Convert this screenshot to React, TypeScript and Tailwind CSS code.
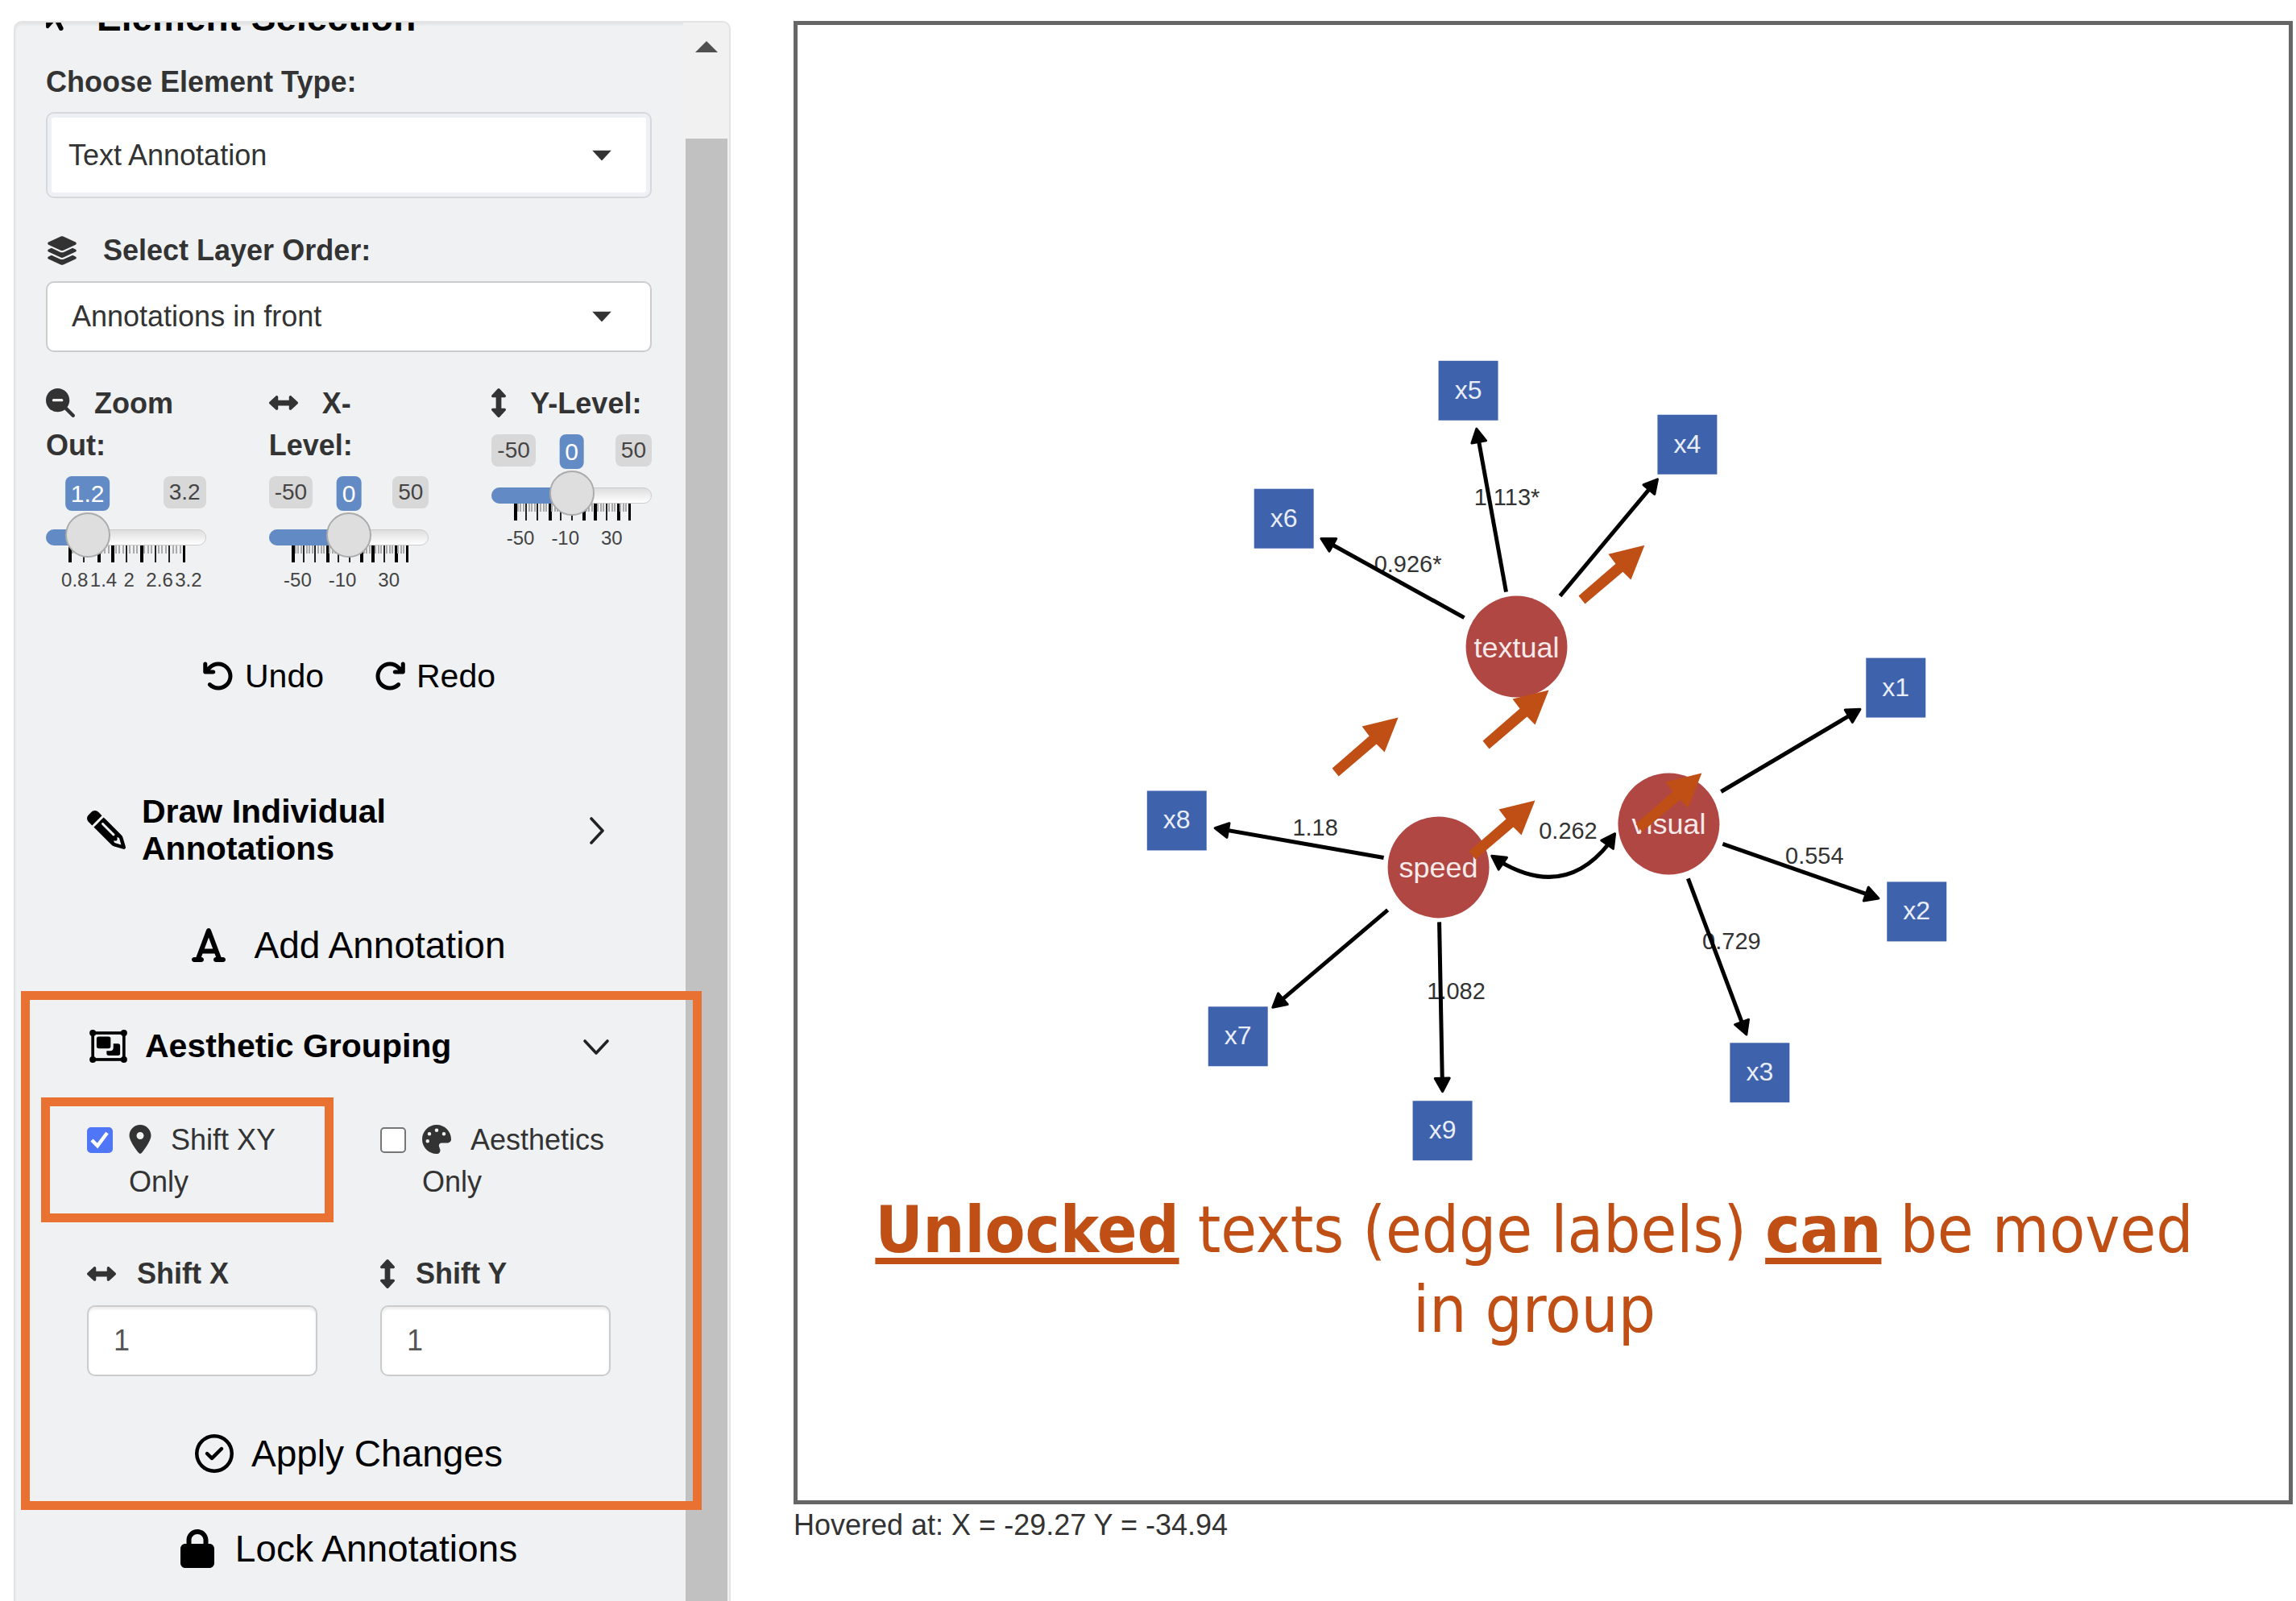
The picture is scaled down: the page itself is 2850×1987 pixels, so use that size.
import { useId, type ReactNode } from "react";
import {
  FaArrowPointer,
  FaLayerGroup,
  FaMagnifyingGlassMinus,
  FaLeftRight,
  FaUpDown,
  FaArrowRotateLeft,
  FaArrowRotateRight,
  FaPencil,
  FaFont,
  FaLocationDot,
  FaPalette,
  FaRegCircleCheck,
  FaLock,
} from "react-icons/fa6";

function Caret() {
  return (
    <svg viewBox="0 0 24 13" className="pointer-events-none absolute right-[50px] top-1/2 h-[13px] w-6 -translate-y-1/2 fill-[#333]">
      <path d="M0 0h24L12 13z" />
    </svg>
  );
}

function Chevron({ open }: { open?: boolean }) {
  return (
    <svg viewBox="0 0 36 36" className="size-9 shrink-0 fill-none stroke-[#222] stroke-[3.6]" strokeLinecap="round" strokeLinejoin="round">
      {open ? <path d="M4 12l14 15 14-15" /> : <path d="M12 4l14 15-14 15" />}
    </svg>
  );
}

function GroupIcon() {
  return (
    <svg viewBox="0 0 139 122" className="ml-[3px] mr-[22px] h-[41px] w-[47px] shrink-0 fill-black">
      <rect x="12" y="12" width="115" height="98" fill="none" stroke="#000" strokeWidth="11" />
      <circle cx="12" cy="12" r="12" />
      <circle cx="127" cy="12" r="12" />
      <circle cx="12" cy="110" r="12" />
      <circle cx="127" cy="110" r="12" />
      <rect x="26" y="25" width="52" height="44" rx="8" />
      <path d="M88 51h17a8 8 0 0 1 8 8v28a8 8 0 0 1-8 8H71a8 8 0 0 1-8-8v-9h13a12 12 0 0 0 12-12z" />
    </svg>
  );
}

type SliderProps = {
  icon: ReactNode;
  label: string;
  min?: string;
  max: string;
  value: string;
  range: [number, number, number];
  pct: number;
  labels: { text: string; at: number }[];
  steps: number;
  minor: number;
  bold: number[];
};

function Slider({ icon, label, min, max, value, range, pct, labels, steps, minor, bold }: SliderProps) {
  const id = useId();
  const total = steps * minor;
  const ticks = Array.from({ length: total + 1 }, (_, i) => i);
  return (
    <div className="min-w-0 flex-1">
      <label htmlFor={id} className="block text-[36px] font-bold leading-[52px]">
        {icon}
        {label}
      </label>
      <div className="relative mt-3 h-[148px]">
        <div className="flex justify-between text-[28px] leading-10 text-[#444]">
          <span className={min ? "rounded-lg bg-[#d8d8d9] px-[7px]" : "invisible"}>{min ?? "0"}</span>
          <span className="rounded-lg bg-[#d8d8d9] px-[7px]">{max}</span>
        </div>
        <span
          className="absolute top-0 -translate-x-1/2 rounded-lg bg-[#628bc6] px-[7px] text-[30px] leading-[43px] text-white"
          style={{ left: `${pct}%` }}
        >
          {value}
        </span>
        <div className="absolute inset-x-0 top-[66px] h-5 rounded-[10px] border border-[#ccc] bg-gradient-to-b from-[#dedede] to-white" />
        <div className="absolute left-0 top-[66px] h-5 rounded-l-[10px] bg-[#628bc6]" style={{ width: `${pct}%` }} />
        <svg viewBox="0 0 146 22" className="absolute left-[27px] top-[86px] h-[22px] w-[146px]">
          {ticks.map((i) => {
            const major = i % minor === 0;
            const heavy = major && bold.includes(i / minor);
            const x = Math.round(2 + (i * 142) / total);
            return (
              <rect
                key={i}
                x={x - 1}
                y="0"
                width={heavy ? 4 : 2}
                height={major ? 21 : 10}
                fill={major ? (heavy ? "#000" : "#222") : "#aaa"}
              />
            );
          })}
        </svg>
        {labels.map((l) => (
          <span key={l.text} className="absolute top-[113px] -translate-x-1/2 text-[24px] leading-8 text-[#444]" style={{ left: `${l.at}%` }}>
            {l.text}
          </span>
        ))}
        <span
          className="absolute top-[45px] size-14 -translate-x-1/2 rounded-full border-2 border-[#ababab] bg-[#dedede]"
          style={{ left: `${pct}%` }}
        />
        <input
          id={id}
          type="range"
          min={range[0]}
          max={range[1]}
          defaultValue={range[2]}
          step={0.1}
          className="absolute inset-x-0 top-[45px] h-14 w-full opacity-0"
        />
      </div>
    </div>
  );
}

function NumberField({ icon, label }: { icon: ReactNode; label: string }) {
  const id = useId();
  return (
    <div className="min-w-0 flex-1">
      <label htmlFor={id} className="flex h-[52px] items-center text-[36px] font-bold">
        <span className="mr-[26px]">{icon}</span>
        {label}
      </label>
      <input
        id={id}
        type="text"
        inputMode="numeric"
        defaultValue="1"
        className="mt-[13px] block h-[88px] w-full rounded-[10px] border-2 border-[#ccc] bg-white px-[31px] text-[36px] text-[#555] shadow-[inset_0_3px_3px_rgba(0,0,0,0.075)]"
      />
    </div>
  );
}

function Check({ icon, label, checked }: { icon: ReactNode; label: string; checked?: boolean }) {
  return (
    <label className="flex min-w-0 flex-1 items-start text-[36px] leading-[52px]">
      <span className="relative mt-[10px] size-8 shrink-0">
        <input
          type="checkbox"
          defaultChecked={checked}
          className="peer block size-8 appearance-none rounded-[5px] border-2 border-[#767676] bg-white checked:border-[#4f76f6] checked:bg-[#4f76f6]"
        />
        <svg viewBox="0 0 32 32" className="pointer-events-none absolute inset-0 hidden fill-none stroke-white stroke-[4.5] peer-checked:block">
          <path d="M6 16l7 7L25 7" />
        </svg>
      </span>
      <span className="ml-5">
        <span className="mr-6 inline-block align-[-5px]">{icon}</span>
        {label}
      </span>
    </label>
  );
}

function Action({ icon, children }: { icon: ReactNode; children: ReactNode }) {
  return (
    <button type="button" className="flex items-center justify-center text-[46px] leading-[60px] text-black">
      {icon}
      {children}
    </button>
  );
}

const squares = [
  { id: "x5", x: 1823, y: 485 },
  { id: "x4", x: 2095, y: 552 },
  { id: "x6", x: 1594, y: 644 },
  { id: "x8", x: 1461, y: 1019 },
  { id: "x7", x: 1537, y: 1287 },
  { id: "x9", x: 1791, y: 1404 },
  { id: "x1", x: 2354, y: 854 },
  { id: "x2", x: 2380, y: 1132 },
  { id: "x3", x: 2185, y: 1332 },
];
const circles = [
  { id: "textual", x: 1883, y: 803 },
  { id: "speed", x: 1786, y: 1077 },
  { id: "visual", x: 2072, y: 1023 },
];
const edges = [
  [1870, 735, 1833, 531],
  [1937, 740, 2059, 594],
  [1818, 767, 1639, 668],
  [1718, 1065, 1507, 1028],
  [1723, 1130, 1579, 1252],
  [1787, 1145, 1791, 1357],
  [2137, 983, 2311, 880],
  [2139, 1048, 2334, 1116],
  [2096, 1091, 2169, 1286],
];
const edgeLabels = [
  { t: "1.113*", x: 1871, y: 627 },
  { t: "0.926*", x: 1748, y: 710 },
  { t: "1.18", x: 1633, y: 1038 },
  { t: "0.262", x: 1947, y: 1042 },
  { t: "1.082", x: 1808, y: 1241 },
  { t: "0.554", x: 2253, y: 1073 },
  { t: "0.729", x: 2150, y: 1179 },
];
const pointers = [
  [2042, 677],
  [1923, 857],
  [1736, 891],
  [1906, 994],
  [2113, 960],
];

function Diagram() {
  return (
    <svg viewBox="990 31 1852 1832" className="block h-auto w-full font-['Liberation_Sans',Arial,sans-serif]">
      <defs>
        <marker id="head" viewBox="-20 -12 24 24" markerWidth="24" markerHeight="24" refX="0" refY="0" orient="auto-start-reverse" markerUnits="userSpaceOnUse">
          <path d="M-1.500 0L-18 -9V9z" stroke="#000" strokeWidth="3" strokeLinejoin="round" />
        </marker>
      </defs>
      <g fontSize="29" fill="#333" textAnchor="middle">
        {edgeLabels.map((l) => (
          <text key={l.t} x={l.x} y={l.y}>
            {l.t}
          </text>
        ))}
      </g>
      <g stroke="#000" strokeWidth="5" fill="none">
        {edges.map(([x1, y1, x2, y2]) => {
          const len = Math.hypot(x2 - x1, y2 - y1);
          const k = (len - 12) / len;
          return (
            <g key={`${x2}`}>
              <path d={`M${x1} ${y1}L${x1 + (x2 - x1) * k} ${y1 + (y2 - y1) * k}`} />
              <path d={`M${x1} ${y1}L${x2} ${y2}`} stroke="none" markerEnd="url(#head)" />
            </g>
          );
        })}
        <path d="M1861 1069Q1942 1118 1998 1047" />
        <path d="M1851 1062Q1942 1125 2006 1034" stroke="none" markerStart="url(#head)" markerEnd="url(#head)" />
      </g>
      <g textAnchor="middle" fontSize="32">
        {squares.map((n) => (
          <g key={n.id}>
            <rect x={n.x - 37} y={n.y - 37} width="74" height="74" fill="#3f62ad" />
            <text x={n.x} y={n.y + 10} fill="#e8edf7">
              {n.id}
            </text>
          </g>
        ))}
      </g>
      <g textAnchor="middle" fontSize="36">
        {circles.map((n) => (
          <g key={n.id}>
            <circle cx={n.x} cy={n.y} r="63" fill="#b04743" />
            <text x={n.x} y={n.y + 13} fill="#f7eaea">
              {n.id}
            </text>
          </g>
        ))}
      </g>
      <g fill="#c04f15">
        {pointers.map(([x, y]) => (
          <path key={x} d={`M${x} ${y}l-45 11 9 12 -46 40 8 10 47 -40 10 10z`} />
        ))}
      </g>
    </svg>
  );
}

const xyLabels = [
  { text: "-50", at: 18 },
  { text: "-10", at: 46 },
  { text: "30", at: 75 },
];

export default function App() {
  return (
    <div className="flex h-screen items-start overflow-hidden bg-white pl-[17px] pt-[26px] font-['Liberation_Sans',Arial,sans-serif] text-[#333]">
      <aside className="flex h-full w-[890px] shrink-0 overflow-hidden rounded-t-[10px] border-2 border-b-0 border-[#e3e3e3] bg-[#eff1f3] shadow-[inset_0_3px_3px_rgba(0,0,0,0.05)]">
        <div className="min-w-0 flex-1 pl-[38px] pr-[39px]">
          <h2 className="-mt-8 flex h-[52px] items-center text-[46px] font-bold text-black">
            <FaArrowPointer className="mb-2 mr-[34px] h-[46px] w-[29px]" />
            Element Selection
          </h2>

          <label htmlFor="etype" className="mt-[28px] block text-[36px] font-bold leading-[52px]">
            Choose Element Type:
          </label>
          <div className="relative mt-[11px]">
            <select
              id="etype"
              className="block h-[107px] w-full appearance-none rounded-[10px] border-2 border-[#d5d8dc] bg-white pl-[26px] text-[36px] shadow-[inset_0_0_0_5px_#edf0f4]"
            >
              <option>Text Annotation</option>
            </select>
            <Caret />
          </div>

          <label htmlFor="layer" className="mt-[39px] flex h-[52px] items-center text-[36px] font-bold">
            <FaLayerGroup className="mr-[31px] size-10" />
            Select Layer Order:
          </label>
          <div className="relative mt-[12px]">
            <select id="layer" className="block h-[88px] w-full appearance-none rounded-[10px] border-2 border-[#ccc] bg-white pl-[30px] text-[36px]">
              <option>Annotations in front</option>
            </select>
            <Caret />
          </div>

          <div className="mt-[38px] flex gap-[78px]">
            <Slider
              icon={<FaMagnifyingGlassMinus className="mr-6 inline-block size-9 align-[-5px]" />}
              label="Zoom Out:"
              max="3.2"
              value="1.2"
              range={[0.8, 3.2, 1.2]}
              pct={26}
              steps={8}
              minor={4}
              bold={[0, 2, 3, 5, 8]}
              labels={[
                { text: "0.8", at: 18 },
                { text: "1.4", at: 36 },
                { text: "2", at: 52 },
                { text: "2.6", at: 71 },
                { text: "3.2", at: 89 },
              ]}
            />
            <Slider
              icon={<FaLeftRight className="mr-[30px] inline-block size-9 align-[-5px]" />}
              label="X-Level:"
              min="-50"
              max="50"
              value="0"
              range={[-50, 50, 0]}
              pct={50}
              steps={10}
              minor={4}
              bold={[0, 3, 6, 7, 9, 10]}
              labels={xyLabels}
            />
            <Slider
              icon={<FaUpDown className="mr-[30px] inline-block h-9 w-[18px] align-[-5px]" />}
              label="Y-Level:"
              min="-50"
              max="50"
              value="0"
              range={[-50, 50, 0]}
              pct={50}
              steps={10}
              minor={4}
              bold={[0, 3, 6, 7, 9, 10]}
              labels={xyLabels}
            />
          </div>

          <div className="mt-[70px] flex justify-center gap-[62px] text-[41px] leading-[60px] text-black">
            <button type="button" className="flex items-center gap-[13px]">
              <FaArrowRotateLeft className="size-10" />
              Undo
            </button>
            <button type="button" className="flex items-center gap-[13px]">
              <FaArrowRotateRight className="size-10" />
              Redo
            </button>
          </div>

          <button type="button" className="mt-[115px] flex w-full items-center px-[51px] text-left text-[41px] font-bold leading-[46px] text-black">
            <FaPencil className="mr-5 size-12 shrink-0 -scale-x-100" />
            <span className="flex-1">
              Draw Individual
              <br />
              Annotations
            </span>
            <Chevron />
          </button>

          <div className="mt-[67px] flex justify-center">
            <Action icon={<FaFont className="mr-[35px] h-12 w-[42px]" />}>Add Annotation</Action>
          </div>

          <section className="relative mt-[65px] px-[51px]">
            <div className="pointer-events-none absolute -left-[31px] -right-[62px] -top-[38px] z-10 h-[644px] border-[11px] border-[#e97132]" />
            <button type="button" className="flex w-full items-center text-left text-[41px] font-bold leading-[60px] text-black">
              <GroupIcon />
              <span className="flex-1">Aesthetic Grouping</span>
              <Chevron open />
            </button>
            <div className="relative mt-[61px] flex gap-[78px]">
              <div className="pointer-events-none absolute -left-[57px] -top-[27px] h-[155px] w-[363px] border-[11px] border-[#e97132]" />
              <Check checked label="Shift XY Only" icon={<FaLocationDot className="h-9 w-7" />} />
              <Check label="Aesthetics Only" icon={<FaPalette className="size-9" />} />
            </div>
            <div className="mt-[62px] flex gap-[78px]">
              <NumberField icon={<FaLeftRight className="size-9" />} label="Shift X" />
              <NumberField icon={<FaUpDown className="h-9 w-[18px]" />} label="Shift Y" />
            </div>
            <div className="mt-[66px] flex justify-center">
              <Action icon={<FaRegCircleCheck className="mr-[22px] size-12" />}>Apply Changes</Action>
            </div>
          </section>

          <div className="mt-[58px] flex justify-center">
            <Action icon={<FaLock className="mr-[26px] h-12 w-[42px]" />}>Lock Annotations</Action>
          </div>
        </div>

        <div className="flex w-[57px] shrink-0 flex-col bg-[#f1f1f1]">
          <div className="flex h-[144px] justify-center pt-[23px]">
            <svg viewBox="0 0 28 14" className="h-[14px] w-7 fill-[#505050]">
              <path d="M14 0l14 14H0z" />
            </svg>
          </div>
          <div className="ml-[3px] mr-[2px] flex-1 bg-[#c1c1c1]" />
        </div>
      </aside>

      <main className="ml-[78px] mr-1 min-w-0 flex-1">
        <div className="relative border-[5px] border-[#666]">
          <Diagram />
          <p className="absolute left-5 right-[42px] top-[1446px] text-center font-['DejaVu_Sans_Condensed','Noto_Sans',sans-serif] text-[81px] leading-[99px] text-[#c04f15]">
            <b className="underline decoration-[8px] underline-offset-[7px]">Unlocked</b> texts (edge labels){" "}
            <b className="underline decoration-[8px] underline-offset-[7px]">can</b> be moved
            <br />
            in group
          </p>
        </div>
        <p className="text-[36px] leading-[52px]">Hovered at: X = -29.27 Y = -34.94</p>
      </main>
    </div>
  );
}
